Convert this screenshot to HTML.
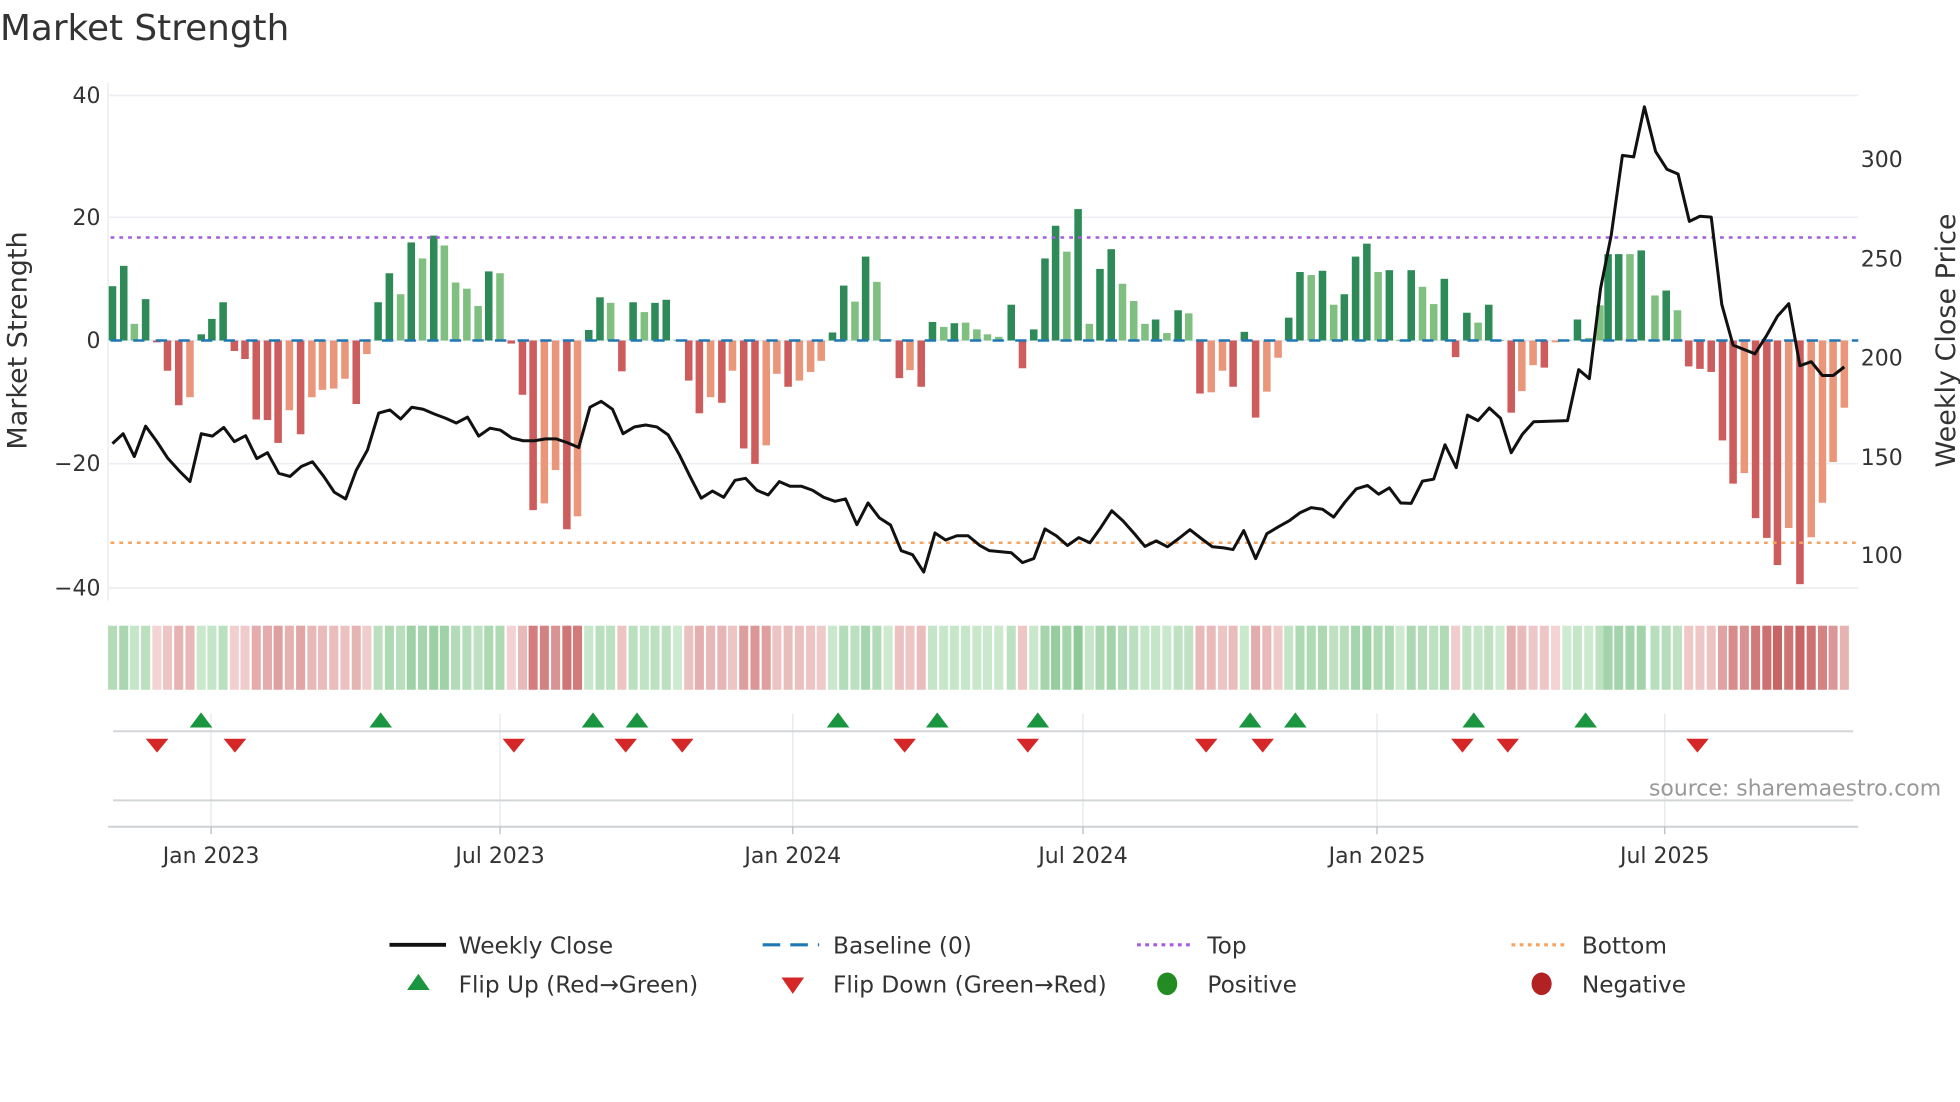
<!DOCTYPE html>
<html><head><meta charset="utf-8"><style>
html,body{margin:0;padding:0;background:#fff;}
svg{display:block;font-family:"DejaVu Sans","Liberation Sans",sans-serif;}
</style></head><body>
<svg id="s" width="1960" height="1102" viewBox="0 0 1560 877.1" xmlns="http://www.w3.org/2000/svg">
<rect width="1560" height="878" fill="#fff"/>
<text x="0" y="32" font-size="28.5" fill="#333">Market Strength</text>
<g id="grid" stroke="#eceef1" stroke-width="1.3">
<line x1="86" x2="1479" y1="76" y2="76"/><line x1="86" x2="1479" y1="173" y2="173"/><line x1="86" x2="1479" y1="271" y2="271"/><line x1="86" x2="1479" y1="369" y2="369"/><line x1="86" x2="1479" y1="468" y2="468"/>
<line x1="86" x2="86" y1="66" y2="478"/>
</g>
<g font-size="17.5" fill="#333" text-anchor="end">
<text x="80" y="82">40</text><text x="80" y="179">20</text><text x="80" y="277">0</text><text x="80" y="375">−20</text><text x="80" y="474">−40</text>
</g>
<g font-size="17.5" fill="#333">
<text x="1481" y="133">300</text><text x="1481" y="212">250</text><text x="1481" y="291">200</text><text x="1481" y="370">150</text><text x="1481" y="448">100</text>
</g>
<text transform="translate(21,271) rotate(-90)" font-size="21.5" fill="#333" text-anchor="middle">Market Strength</text>
<text transform="translate(1556,271) rotate(-90)" font-size="21.5" fill="#333" text-anchor="middle">Weekly Close Price</text>
<g id="bars"></g>
<line x1="88" x2="1479" y1="271" y2="271" stroke="#1f77b4" stroke-width="2" stroke-dasharray="9,9"/>
<line x1="88" x2="1479" y1="189" y2="189" stroke="#a35be0" stroke-width="2" stroke-dasharray="3,4"/>
<line x1="88" x2="1479" y1="432" y2="432" stroke="#f4a460" stroke-width="2" stroke-dasharray="3,4"/>
<polyline id="price" fill="none" stroke="#111" stroke-width="2.4" stroke-linejoin="round"/>
<g id="heat"></g>
<g stroke="#e4e7ea" stroke-width="1">
<line x1="168" x2="168" y1="568" y2="658"/><line x1="398" x2="398" y1="568" y2="658"/><line x1="631" x2="631" y1="568" y2="658"/><line x1="862" x2="862" y1="568" y2="658"/><line x1="1096" x2="1096" y1="568" y2="658"/><line x1="1325" x2="1325" y1="568" y2="658"/>
</g>
<line x1="90" x2="1475" y1="582" y2="582" stroke="#d3d6d9" stroke-width="1.6"/>
<line x1="90" x2="1475" y1="637" y2="637" stroke="#d3d6d9" stroke-width="1.6"/>
<line x1="86" x2="1479" y1="658" y2="658" stroke="#cfd2d5" stroke-width="1.6"/>
<g stroke="#bbb" stroke-width="1"><line x1="168" x2="168" y1="658" y2="664"/><line x1="398" x2="398" y1="658" y2="664"/><line x1="631" x2="631" y1="658" y2="664"/><line x1="862" x2="862" y1="658" y2="664"/><line x1="1096" x2="1096" y1="658" y2="664"/><line x1="1325" x2="1325" y1="658" y2="664"/></g>
<g id="mk"></g>
<text x="1545" y="633" font-size="17.5" fill="#999" text-anchor="end">source: sharemaestro.com</text>
<g font-size="17.5" fill="#333" text-anchor="middle">
<text x="168" y="687">Jan 2023</text><text x="398" y="687">Jul 2023</text><text x="631" y="687">Jan 2024</text><text x="862" y="687">Jul 2024</text><text x="1096" y="687">Jan 2025</text><text x="1325" y="687">Jul 2025</text>
</g>
<g font-size="18.5" fill="#333">
<line x1="310" x2="355" y1="752" y2="752" stroke="#111" stroke-width="3"/>
<text x="365" y="759">Weekly Close</text>
<line x1="607" x2="652" y1="752" y2="752" stroke="#1f77b4" stroke-width="2.5" stroke-dasharray="14,8"/>
<text x="663" y="759">Baseline (0)</text>
<line x1="905" x2="950" y1="752" y2="752" stroke="#a35be0" stroke-width="2.5" stroke-dasharray="3,3.5"/>
<text x="961" y="759">Top</text>
<line x1="1203" x2="1248" y1="752" y2="752" stroke="#f4a460" stroke-width="2.5" stroke-dasharray="3,3.5"/>
<text x="1259" y="759">Bottom</text>
<polygon points="324,788 342,788 333,775" fill="#1a9641"/>
<text x="365" y="790">Flip Up (Red→Green)</text>
<polygon points="622,778 640,778 631,791" fill="#d62728"/>
<text x="663" y="790">Flip Down (Green→Red)</text>
<ellipse cx="929" cy="783" rx="8" ry="9" fill="#228b22"/>
<text x="961" y="790">Positive</text>
<ellipse cx="1227" cy="783" rx="8" ry="9" fill="#b22222"/>
<text x="1259" y="790">Negative</text>
</g>
</svg>
<script>
(function(){
var NS="http://www.w3.org/2000/svg";
function el(t,a,p){var e=document.createElementNS(NS,t);for(var k in a)e.setAttribute(k,a[k]);p.appendChild(e);return e;}
var z1=[[180,8.8,'D'],[198,12.1,'D'],[215,2.7,'L'],[233,6.7,'D'],[251,-0.3,'R'],[268,-4.9,'R'],[286,-10.5,'R'],[304,-9.2,'O'],[322,1.0,'D'],[339,3.5,'D'],[357,6.2,'D'],[375,-1.7,'R'],[392,-3.0,'R'],[410,-12.8,'R'],[428,-12.9,'R'],[445,-16.6,'R'],[463,-11.3,'O'],[481,-15.2,'R'],[499,-9.2,'O'],[516,-8.0,'O'],[534,-7.8,'O'],[552,-6.2,'O'],[570,-10.3,'R'],[587,-2.2,'O'],[605,6.2,'D'],[623,10.9,'D'],[641,7.5,'L'],[658,15.9,'D'],[676,13.3,'L'],[694,17.0,'D'],[711,15.4,'L'],[729,9.4,'L'],[747,8.4,'L'],[765,5.6,'L'],[782,11.2,'D'],[800,10.9,'L'],[818,-0.5,'R'],[836,-8.8,'R'],[853,-27.5,'R'],[871,-26.4,'O'],[889,-21.0,'O'],[907,-30.6,'R'],[924,-28.5,'O'],[942,1.7,'D'],[960,7.0,'D'],[977,6.1,'L'],[995,-5.0,'R'],[1013,6.2,'D'],[1031,4.6,'L'],[1048,6.1,'D'],[1066,6.6,'D'],[1084,0.1,'L'],[1102,-6.5,'R'],[1119,-11.8,'R'],[1137,-9.2,'O'],[1155,-10.1,'R'],[1172,-4.9,'O'],[1190,-17.5,'R'],[1208,-20.0,'R'],[1226,-17.0,'O'],[1243,-5.4,'O'],[1261,-7.5,'R'],[1279,-6.5,'O'],[1297,-5.1,'O'],[1314,-3.3,'O'],[1332,1.3,'D'],[1350,8.9,'D'],[1368,6.3,'L'],[1385,13.6,'D'],[1403,9.5,'L'],[1421,0.2,'L'],[1439,-6.1,'R'],[1456,-4.8,'O'],[1474,-7.5,'R'],[1492,3.0,'D'],[1510,2.2,'L'],[1527,2.8,'D'],[1545,2.9,'L'],[1563,1.8,'L']];
var z2=[[12,1.0,'L'],[30,0.6,'L'],[50,5.8,'D'],[68,-4.5,'R'],[86,1.8,'D'],[104,13.3,'D'],[121,18.6,'D'],[139,14.4,'L'],[157,21.3,'D'],[175,2.7,'L'],[192,11.6,'D'],[210,14.8,'D'],[228,9.2,'L'],[246,6.4,'L'],[264,2.7,'L'],[281,3.4,'D'],[299,1.2,'L'],[317,4.9,'D'],[334,4.4,'L'],[352,-8.6,'R'],[370,-8.4,'O'],[388,-4.9,'O'],[405,-7.5,'R'],[423,1.4,'D'],[441,-12.5,'R'],[459,-8.3,'O'],[477,-2.8,'O'],[494,3.7,'D'],[512,11.1,'D'],[530,10.6,'L'],[548,11.3,'D'],[566,5.8,'L'],[583,7.5,'D'],[601,13.6,'D'],[619,15.7,'D'],[637,11.1,'L'],[655,11.4,'D'],[672,0.1,'L'],[690,11.4,'D'],[708,8.7,'L'],[726,5.9,'L'],[743,10.0,'D'],[761,-2.7,'R'],[779,4.5,'D'],[797,2.9,'L'],[814,5.8,'D'],[832,0.1,'L'],[850,-11.7,'R'],[867,-8.2,'O'],[885,-4.0,'O'],[903,-4.4,'R'],[921,-0.3,'O'],[939,0.1,'L'],[956,3.4,'D'],[974,0.4,'L'],[992,5.7,'L'],[1005,14.0,'D'],[1022,14.0,'D'],[1040,14.0,'L'],[1058,14.6,'D'],[1080,7.3,'L'],[1098,8.1,'D'],[1116,4.9,'L'],[1134,-4.2,'R'],[1152,-4.6,'R'],[1170,-5.1,'R'],[1188,-16.2,'R'],[1205,-23.2,'R'],[1223,-21.5,'O'],[1241,-28.8,'R'],[1259,-32.0,'R'],[1276,-36.4,'R'],[1294,-30.4,'O'],[1312,-39.5,'R'],[1330,-31.9,'O'],[1348,-26.3,'O'],[1365,-19.7,'O'],[1383,-10.9,'O']];
var S=2.0103,SY=3.178,bars=[];
z1.forEach(function(b){bars.push([b[0]/S,b[1],b[2]]);});
z2.forEach(function(b){bars.push([(b[0]+1568)/S,b[1],b[2]]);});
var col={D:'#2e8b57',L:'#7fbf7f',R:'#cd5c5c',O:'#e9967a'};
var g=document.getElementById('bars'),h=document.getElementById('heat');
function mix(a,b,t){return 'rgb('+[0,1,2].map(function(i){return Math.round(a[i]+(b[i]-a[i])*t);}).join(',')+')';}
bars.forEach(function(b){
 var x=b[0],v=b[1],y0=271,y1=271-v*4.91;
 el('rect',{x:x-3,y:Math.min(y0,y1),width:6,height:Math.max(0.8,Math.abs(y1-y0)),fill:col[b[2]]},g);
 var c;
 if(v>=0){var t=Math.min(1,v/22);c=mix([206,234,208],[140,200,150],t);}
 else{var t=Math.min(1,-v/36);c=mix([243,212,212],[200,100,100],t);}
 el('rect',{x:x-3.6,y:498,width:7.2,height:51,fill:c},h);
});
var p1=[[180,1122],[197,1097],[215,1155],[233,1078],[250,1115],[268,1158],[286,1190],[304,1218],[322,1097],[340,1103],[358,1081],[375,1117],[393,1102],[411,1160],[428,1145],[446,1197],[464,1205],[482,1180],[500,1168],[518,1205],[535,1245],[553,1262],[570,1190],[588,1138],[606,1045],[624,1037],[641,1060],[659,1030],[677,1035],[695,1047],[713,1058],[730,1070],[748,1055],[766,1103],[784,1083],[801,1088],[819,1108],[837,1115],[855,1115],[873,1110],[890,1110],[908,1120],[926,1132],[944,1030],[962,1015],[980,1035],[997,1097],[1015,1080],[1033,1075],[1051,1080],[1069,1100],[1087,1150],[1104,1205],[1122,1260],[1140,1242],[1158,1258],[1176,1215],[1193,1210],[1211,1240],[1229,1252],[1247,1218],[1264,1230],[1282,1230],[1300,1240],[1318,1258],[1336,1268],[1353,1262],[1371,1327],[1389,1272],[1407,1310],[1425,1328],[1442,1393],[1460,1403],[1478,1447],[1496,1348],[1513,1366],[1531,1355],[1549,1355]];
var p2=[[0,1380],[15,1393],[50,1398],[68,1423],[86,1413],[104,1338],[122,1355],[140,1380],[158,1360],[176,1373],[193,1335],[211,1292],[229,1318],[247,1350],[264,1382],[282,1368],[300,1383],[318,1362],[336,1340],[354,1362],[372,1383],[390,1386],[405,1390],[422,1342],[441,1413],[459,1350],[477,1333],[495,1317],[512,1297],[530,1284],[548,1288],[566,1308],[584,1270],[602,1237],[620,1228],[638,1250],[655,1234],[673,1272],[690,1273],[708,1217],[726,1212],[744,1125],[762,1183],[780,1050],[797,1064],[815,1032],[833,1058],[850,1145],[868,1098],[886,1067],[940,1064],[958,935],[975,958],[993,730],[1010,595],[1028,393],[1046,397],[1063,270],[1081,383],[1099,428],[1117,440],[1135,560],[1152,547],[1170,549],[1187,770],[1205,873],[1240,895],[1258,850],[1276,800],[1294,768],[1312,925],[1330,915],[1348,950],[1365,950],[1383,928]];
var pts=[];
p1.forEach(function(p){pts.push((p[0]/S).toFixed(1)+','+(p[1]/SY).toFixed(1));});
p2.forEach(function(p){pts.push(((p[0]+1568)/S).toFixed(1)+','+(p[1]/SY).toFixed(1));});
document.getElementById('price').setAttribute('points',pts.join(' '));
var mk=document.getElementById('mk');
[160,303,472,507,667,746,826,995,1031,1173,1262].forEach(function(x){el('polygon',{points:(x-9)+',579 '+(x+9)+',579 '+x+',567',fill:'#1a9641'},mk);});
[125,187,409,498,543,720,818,960,1005,1164,1200,1351].forEach(function(x){el('polygon',{points:(x-9)+',588 '+(x+9)+',588 '+x+',599',fill:'#d62728'},mk);});
})();
</script>
</body></html>
